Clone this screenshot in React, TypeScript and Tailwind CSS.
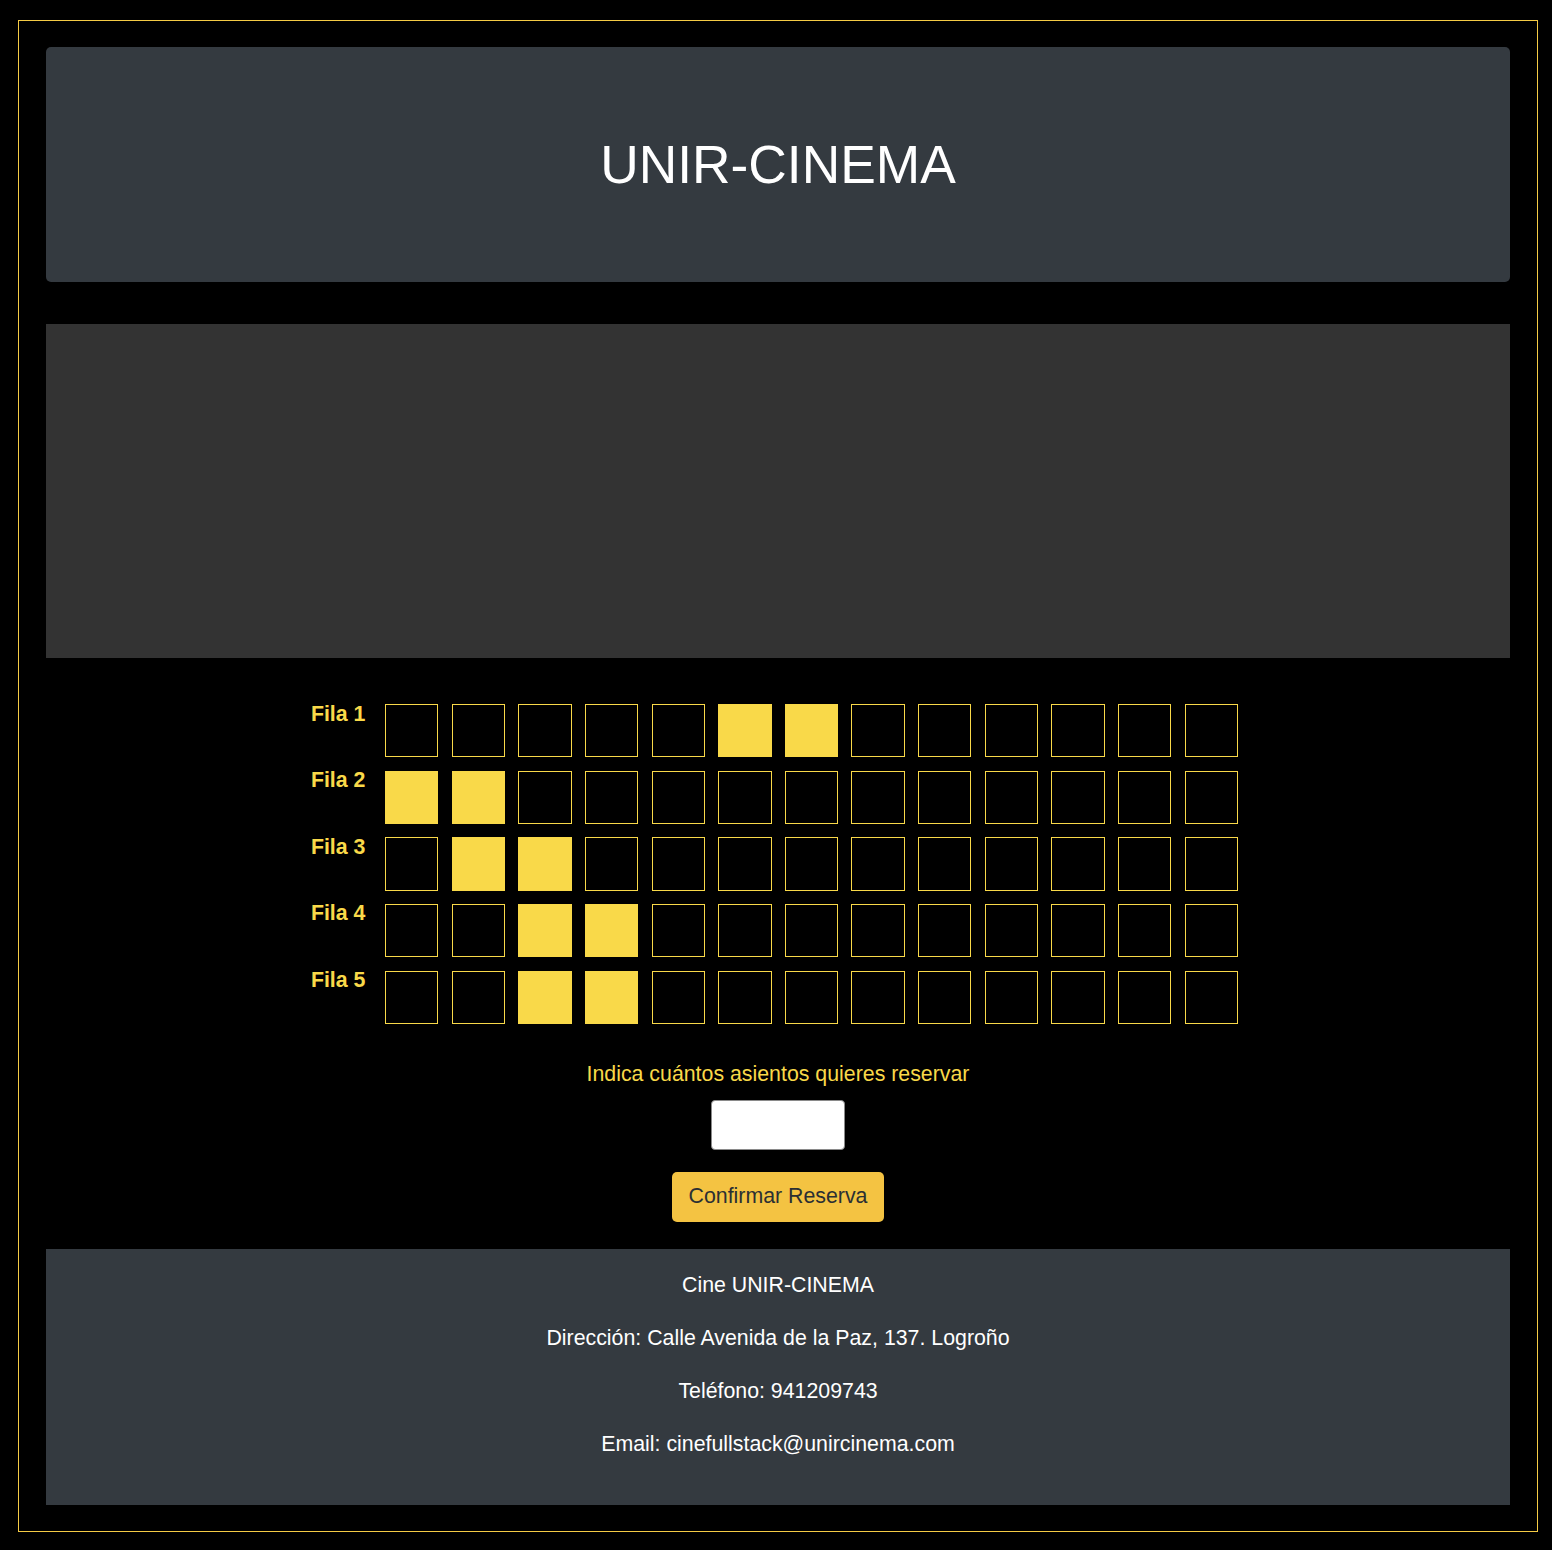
import React from "react";

const filled: Record<number, number[]> = {
  1: [6, 7],
  2: [1, 2],
  3: [2, 3],
  4: [3, 4],
  5: [3, 4],
};

export default function App() {
  const rows = [1, 2, 3, 4, 5];
  const cols = Array.from({ length: 13 }, (_, i) => i + 1);
  return (
    <div
      className="min-h-[1550px] bg-black pt-[20px] pb-[18px] pl-[18px] pr-[14px]"
      style={{ fontFamily: '"Liberation Sans", Arial, sans-serif' }}
    >
      <div className="border border-[#f5cb45] px-[27px] pt-[26px] pb-[26px]">
        <header className="flex h-[235px] items-center justify-center rounded-[5px] bg-[#343a40]">
          <h1 className="text-[53.33px] leading-none text-white">UNIR-CINEMA</h1>
        </header>

        <div className="mt-[42px] h-[334px] bg-[#333333]" />

        <div className="mt-[46px] flex justify-center pr-[7px]">
          <div className="flex flex-col gap-[13.33px]">
            {rows.map((r) => (
              <div key={r} className="flex items-start">
                <div className="-mt-[2.5px] mr-[20px] w-[54px] whitespace-nowrap text-[21.33px] font-bold leading-[25.6px] text-[#f9d949]">
                  Fila {r}
                </div>
                <div className="flex gap-[13.33px]">
                  {cols.map((c) => {
                    const on = filled[r].includes(c);
                    return (
                      <div
                        key={c}
                        className={
                          on
                            ? "h-[53.33px] w-[53.33px] border border-[#f9d949] bg-[#f9d949]"
                            : "h-[53.33px] w-[53.33px] border border-[#f9d949] bg-black"
                        }
                      />
                    );
                  })}
                </div>
              </div>
            ))}
          </div>
        </div>

        <div className="mt-[38px] flex flex-col items-center">
          <p className="text-[21.33px] leading-[25.6px] text-[#f9d949]">
            Indica cuántos asientos quieres reservar
          </p>
          <input
            type="number"
            className="mt-[12.4px] h-[50px] w-[134px] rounded-[4px] border border-[#8a8a8a] bg-white px-2 text-black outline-none"
          />
          <button className="mt-[22px] h-[50px] w-[212px] rounded-[5px] bg-[#f4c342] text-[21.33px] leading-[25.6px] text-[#2b2f33]">
            Confirmar Reserva
          </button>
        </div>

        <footer className="mt-[27px] bg-[#343a40] pt-[25px] pb-[19px] text-center text-white">
          <p className="mb-[30px] text-[21.33px] leading-[23px]">Cine UNIR-CINEMA</p>
          <p className="mb-[30px] text-[21.33px] leading-[23px]">
            Dirección: Calle Avenida de la Paz, 137. Logroño
          </p>
          <p className="mb-[30px] text-[21.33px] leading-[23px]">Teléfono: 941209743</p>
          <p className="mb-[30px] text-[21.33px] leading-[23px]">
            Email: cinefullstack@unircinema.com
          </p>
        </footer>
      </div>
    </div>
  );
}
